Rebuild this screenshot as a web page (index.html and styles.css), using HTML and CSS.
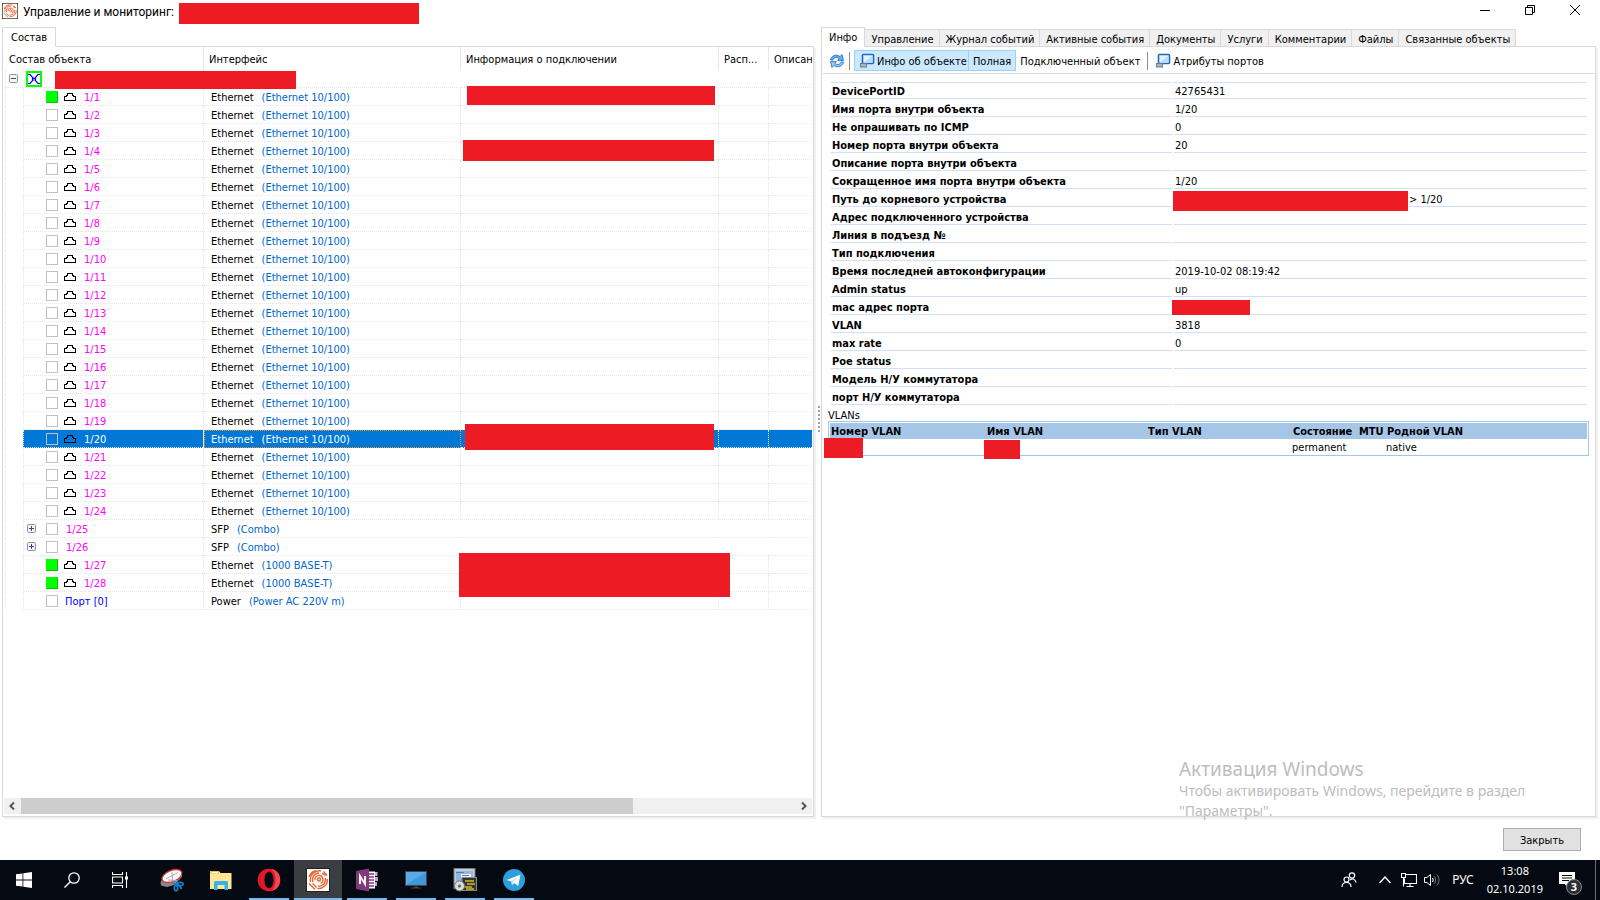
FILE: index.html
```html
<!DOCTYPE html>
<html lang="ru">
<head>
<meta charset="utf-8">
<title>Управление и мониторинг</title>
<link rel="stylesheet" href="styles.css">
</head>
<body>
<svg class="sprites" aria-hidden="true">
  <symbol id="i-port" viewBox="0 0 12 8"><path d="M.5 7.500V3.500H2.500V2.500H3.500V.5H8.500V2.500H9.500V3.500H11.500V7.500Z" fill="none" stroke="#000" shape-rendering="crispEdges"/></symbol>
  <symbol id="i-plus" viewBox="0 0 9 9"><rect x=".5" y=".5" width="8" height="8" rx="1" fill="#f4f4f4" stroke="#919191"/><path d="M2 4.500H7M4.500 2V7" stroke="#2b4a9b"/></symbol>
  <symbol id="i-minus" viewBox="0 0 9 9"><rect x=".5" y=".5" width="8" height="8" rx="1" fill="#f4f4f4" stroke="#919191"/><path d="M2 4.500H7" stroke="#2b4a9b"/></symbol>
  <symbol id="i-switch" viewBox="0 0 16 16"><rect x="1" y="1" width="14" height="14" fill="#fff" stroke="#0f0" stroke-width="2"/><path d="M2 3.500H4L12 12.500H14M2 12.500H4L12 3.500H14M6.500 6.500V9.500M9.500 6.500V9.500" fill="none" stroke="#00f" stroke-width="1.200"/></symbol>
  <symbol id="i-app" viewBox="0 0 24 24"><rect x=".5" y=".5" width="23" height="23" fill="#fff" stroke="#222"/><g fill="none" stroke="#f0642c" stroke-width="1.400"><circle cx="13" cy="11.500" r="1.500"/><path d="M9 12A4 4 0 1 1 14.500 15.300M7 14A6.500 6.500 0 0 1 13 5M19.300 10A6.500 6.500 0 0 1 12 18M4.500 14A9 9 0 0 1 15 3M21.500 11A9 9 0 0 1 11.500 20.500M3 9A9.500 9.500 0 0 1 10 2.800M3 15.500L9 21.500M6.500 15.500L10.500 19.500M16 5.200L19.500 7.500M17.500 3.500L21 7.500"/></g></symbol>
  <symbol id="i-screen" viewBox="0 0 16 16"><rect x="3.500" y="1.500" width="11" height="9" rx="1" fill="#e2f2ff" stroke="#1b6bc4" stroke-width="1.600"/><path d="M4.500 9.500L13.500 3V9.500Z" fill="#b9defc"/><rect x="1.500" y="10.500" width="6" height="3.500" fill="#aab4bf" stroke="#6f7b88"/></symbol>
</svg>

<header class="titlebar">
  <svg class="s16"><use href="#i-app"/></svg>
  <h1 class="title">Управление и мониторинг:</h1>
  <span class="mask mask-title"></span>
  <div class="win-buttons">
    <button aria-label="Свернуть"><svg class="s12" viewBox="0 0 12 12"><path d="M1 6.500H11" stroke="#000"/></svg></button>
    <button aria-label="Восстановить"><svg class="s12" viewBox="0 0 12 12"><path d="M1.500 3.500H8.500V10.500H1.500ZM3.500 3.500V1.500H10.500V8.500H8.500" fill="none" stroke="#000"/></svg></button>
    <button aria-label="Закрыть окно"><svg class="s12" viewBox="0 0 12 12"><path d="M1 1L11 11M11 1L1 11" stroke="#000"/></svg></button>
  </div>
</header>

<main class="workspace">
  <section class="pane">
    <nav class="tabs"><button class="tab active first">Состав</button></nav>
    <div class="panel">
      <div class="tree-wrap">
        <table class="tree">
          <colgroup><col class="c-name"><col class="c-if"><col class="c-conn"><col class="c-loc"><col></colgroup>
          <thead><tr><th>Состав объекта</th><th>Интерфейс</th><th>Информация о подключении</th><th>Расп...</th><th>Описан</th></tr></thead>
          <tbody id="ports"></tbody>
        </table>
      </div>
      <div class="scrollbar">
        <button aria-label="Влево"><svg viewBox="0 0 8 8"><path d="M6 .5L2.500 4L6 7.500" fill="none" stroke="#555" stroke-width="2"/></svg></button>
        <div class="track"><div class="thumb"></div></div>
        <button aria-label="Вправо"><svg viewBox="0 0 8 8"><path d="M2 .5L5.500 4L2 7.500" fill="none" stroke="#555" stroke-width="2"/></svg></button>
      </div>
    </div>
  </section>

  <div class="splitter"><i></i><i></i><i></i><i></i><i></i><i></i><i></i></div>

  <section class="pane">
    <nav class="tabs">
      <button class="tab active">Инфо</button><button class="tab">Управление</button><button class="tab">Журнал событий</button><button class="tab">Активные события</button><button class="tab">Документы</button><button class="tab">Услуги</button><button class="tab">Комментарии</button><button class="tab">Файлы</button><button class="tab">Связанные объекты</button>
    </nav>
    <div class="panel">
      <div class="toolbar">
        <button class="tool refresh" aria-label="Обновить"><svg class="s16" viewBox="0 0 16 16"><path d="M1.500 7C2 3 7 .5 11 3.500L13 1.500L14.500 7.500H8.500L10 5.500C7.500 3.500 4.500 4.500 4 7Z" fill="#62aef0" stroke="#1d6fc0" stroke-width=".8"/><path d="M14.500 9C14 13 9 15.500 5 12.500L3 14.500L1.500 8.500H7.500L6 10.500C8.500 12.500 11.500 11.500 12 9Z" fill="#8cc8f8" stroke="#1d6fc0" stroke-width=".8"/></svg></button>
        <span class="sep"></span>
        <button class="tool on wide"><svg class="s16"><use href="#i-screen"/></svg><span>Инфо об объекте</span></button>
        <button class="tool on"><span>Полная</span></button>
        <button class="tool linked"><span>Подключенный объект</span></button>
        <span class="sep"></span>
        <button class="tool"><svg class="s16"><use href="#i-screen"/></svg><span>Атрибуты портов</span></button>
      </div>
      <div class="info">
        <table class="props"><colgroup><col class="p-name"><col></colgroup><tbody id="props"></tbody></table>
        <h2 class="caption">VLANs</h2>
        <table class="vlans">
          <colgroup><col class="v1"><col class="v2"><col class="v3"><col class="v4"><col class="v5"><col></colgroup>
          <thead><tr><th>Номер VLAN</th><th>Имя VLAN</th><th>Тип VLAN</th><th>Состояние</th><th>MTU</th><th>Родной VLAN</th></tr></thead>
          <tbody><tr><td><span class="mask mask-v1"></span></td><td><span class="mask mask-v2"></span></td><td></td><td>permanent</td><td></td><td>native</td></tr></tbody>
        </table>
      </div>
    </div>
    <div class="activation"><p class="act-title">Активация Windows</p><p>Чтобы активировать Windows, перейдите в раздел "Параметры".</p></div>
  </section>
</main>

<footer class="dialog-footer"><button class="close-btn">Закрыть</button></footer>

<div class="taskbar">
  <div class="apps">
    <button class="task system" aria-label="Пуск"><svg class="s16" viewBox="0 0 16 16"><path d="M0 2.300L6.500 1.400V7.600H0ZM7.300 1.300L16 0V7.600H7.300ZM0 8.400H6.500V14.600L0 13.700ZM7.300 8.400H16V16L7.300 14.700Z" fill="#fff"/></svg></button>
    <button class="task system" aria-label="Поиск"><svg class="s16" viewBox="0 0 16 16"><circle cx="10" cy="6" r="5.200" fill="none" stroke="#fff" stroke-width="1.300"/><path d="M6.300 9.700L.5 15.500" stroke="#fff" stroke-width="1.400"/></svg></button>
    <button class="task system" aria-label="Представление задач"><svg class="s16" viewBox="0 0 16 16"><path d="M.5 0V2.500H10.500V0M.5 16V13.500H10.500V16M.5 5H10.500V11H.5ZM14.500 0V16" fill="none" stroke="#fff" stroke-width="1.100"/><path d="M13 4.500H16V7.500H13Z" fill="#fff"/></svg></button>
    <button class="task snip" aria-label="Ножницы"><svg class="s24" viewBox="0 0 24 24"><path d="M.5 14L4 9L22 5V9L14 17L7 19L1 17.500Z" fill="#85898e"/><ellipse cx="12" cy="8" rx="10.500" ry="5.600" transform="rotate(-22 12 8)" fill="#f8f8fa" stroke="#d8323a" stroke-width="1.300"/><path d="M6 11L18 4.500M12 4L13 14M8 12L17 12.500" stroke="#aaa" fill="none"/><g fill="none" stroke="#1680c8" stroke-width="1.700"><ellipse cx="16" cy="20" rx="1.700" ry="2.700"/><ellipse cx="20.500" cy="16" rx="2.700" ry="1.700"/><path d="M12.500 15L19.500 17.500M16 18L17.500 13M19.500 17.500L21.500 21"/></g></svg></button>
    <button class="task" aria-label="Проводник"><svg class="s24" viewBox="0 0 24 24"><path d="M1 3H10L11.500 5H22.500V21H1Z" fill="#ffe596"/><path d="M1 3H10V5.500H1Z" fill="#f3c03a"/><path d="M2.500 4H9V5H2.500Z" fill="#fff"/><path d="M5 22V14.500Q5 13 6.500 13H17.500Q19 13 19 14.500V22H15.500V17H8.500V22Z" fill="#35b2ea"/></svg></button>
    <button class="task open" aria-label="Opera"><svg class="s24" viewBox="0 0 24 24"><path d="M12 .8C5.500 .8 .8 5.500 .8 12S5.500 23.200 12 23.200 23.200 18.500 23.200 12 18.500 .8 12 .8ZM12 3.800C15 3.800 16.500 7.500 16.500 12S15 20.200 12 20.200 7.500 16.500 7.500 12 9 3.800 12 3.800Z" fill="#e3162a" fill-rule="evenodd"/><path d="M14.500 1.100C20 2.200 23.200 6.500 23.200 12S20 21.800 14.500 22.900C20 18 20 6 14.500 1.100Z" fill="#f04a50"/></svg></button>
    <button class="task open current" aria-label="Управление и мониторинг"><svg class="s24"><use href="#i-app"/></svg></button>
    <button class="task open" aria-label="OneNote"><svg class="s24" viewBox="0 0 24 24"><path d="M13 3.500H20V20.500H13Z" fill="#fff"/><path d="M14 6H19M14 9H19M14 12H19M14 15H19M14 18H19" stroke="#80397b" stroke-width="1.400"/><path d="M20 4H22.500V8H20ZM20 9H23V13H20ZM20 14H22V18H20Z" fill="#c9a5c7"/><path d="M1 3L14 .5V23.500L1 21Z" fill="#80397b"/><path d="M5 16V8L10 16V8" fill="none" stroke="#fff" stroke-width="1.900"/></svg></button>
    <button class="task open" aria-label="Компьютер"><svg class="s24" viewBox="0 0 24 24"><rect x="1.500" y="3.500" width="21" height="14" fill="#3f97de" stroke="#444"/><path d="M2 4H22L2 17Z" fill="#58aaea"/><path d="M10 18.500H14V19.500H17V20.500H7V19.500H10Z" fill="#444"/></svg></button>
    <button class="task open" aria-label="Установщик"><svg class="s24" viewBox="0 0 24 24"><rect x="1" y=".5" width="21" height="20" fill="#c9ccd0" stroke="#77797c"/><path d="M3 3H20V14H3Z" fill="#8fb6e6"/><path d="M8 6H18V10H8Z" fill="#eef3f9"/><path d="M3 4.500H11M9 7.500H16" stroke="#4c7dbb"/><rect x="9" y="9.500" width="14.500" height="13" fill="#333" stroke="#888"/><path d="M12 13H21M14 16H22M12 19H19M13 21H21" stroke="#d4b928" stroke-width="1.300"/><circle cx="6.500" cy="18" r="5" fill="#d8dadc" stroke="#77797c"/><circle cx="6.500" cy="18" r="1.600" fill="#666"/></svg></button>
    <button class="task open" aria-label="Telegram"><svg class="s24" viewBox="0 0 24 24"><circle cx="12" cy="12" r="11" fill="#2ca0dc"/><path d="M4.500 12L18.500 6.500L16.200 18L12 15L10 17.300L9.300 13.500Z" fill="#fff"/><path d="M9.300 13.500L16 8.500L10.500 14.500L10 17.300Z" fill="#b8d5e6"/></svg></button>
  </div>
  <div class="tray">
    <button aria-label="Люди"><svg class="s16" viewBox="0 0 16 16"><g fill="none" stroke="#fff" stroke-width="1.200"><circle cx="5.500" cy="7.500" r="2.500"/><path d="M1 15C1 12 3 10.500 5.500 10.500S10 12 10 15"/><circle cx="11" cy="3.500" r="2.700"/><path d="M9 8C11.500 6 14.500 7 15 10.500"/></g></svg></button>
    <button class="chev" aria-label="Скрытые значки"><svg class="s12" viewBox="0 0 12 12"><path d="M.5 9L6 3L11.500 9" fill="none" stroke="#fff" stroke-width="1.400"/></svg></button>
    <button aria-label="Сеть"><svg class="s16" viewBox="0 0 16 16"><path d="M5 2.500H15.500V11.500H3.500V6.500M9 11.500V14.500M5.500 14.500H12.500M.5 1.500H4.500V5.500H.5ZM2.500 5.500V14.500" fill="none" stroke="#fff" stroke-width="1.100"/></svg></button>
    <button aria-label="Громкость"><svg class="s16" viewBox="0 0 16 16"><path d="M.5 5.500H3L6.500 2.500V13.500L3 10.500H.5Z" fill="none" stroke="#fff"/><path d="M8.500 6Q10 8 8.500 10" fill="none" stroke="#fff"/><path d="M10.500 4.500Q13 8 10.500 11.500M13 2.500Q17 8 13 13.500" fill="none" stroke="#777"/></svg></button>
    <button class="lang">РУС</button>
    <button class="clock"><time>13:08</time><time>02.10.2019</time></button>
    <button class="notify" aria-label="Уведомления"><svg class="s16" viewBox="0 0 16 16"><path d="M0 0H16V12H9V15.500L5.500 12H0Z" fill="#fff"/><path d="M3 3.500H13M3 6H13M3 8.500H10" stroke="#05090f"/></svg><span class="badge">3</span></button>
    <span class="desktop-edge"></span>
  </div>
</div>
<script src="app.js"></script>
</body>
</html>
```

FILE: styles.css
```css
* { box-sizing: border-box; }
body {
  margin: 0;
  height: 100vh;
  display: flex;
  flex-direction: column;
  overflow: hidden;
  background: #fff;
  color: #000;
  font: 11px/14px "DejaVu Sans Condensed", "DejaVu Sans", sans-serif;
}
button {
  font: inherit;
  color: inherit;
  background: none;
  border: 0;
  padding: 0;
  margin: 0;
  white-space: nowrap;
}
h1, h2, p { margin: 0; font-size: inherit; font-weight: inherit; }
svg { display: block; flex: none; }
table { border-collapse: separate; border-spacing: 0; table-layout: fixed; width: 100%; }
th, td { padding: 0; text-align: left; white-space: nowrap; }
.sprites { position: absolute; width: 0; height: 0; }
.s9 { width: 9px; height: 9px; }
.s12 { width: 12px; height: 12px; }
.s16 { width: 16px; height: 16px; }
.s24 { width: 24px; height: 24px; }
.mask { background: #ed1c24; }

/* Title bar */
.titlebar { display: flex; align-items: flex-start; height: 27px; padding: 3px 19px 0 2px; }
.title { margin: 0 0 0 5px; width: 156px; font: 12px/18px Roboto, sans-serif; white-space: nowrap; }
.mask-title { width: 240px; height: 21px; }
.win-buttons { display: flex; gap: 33px; margin-left: auto; padding-top: 1px; }

/* Panes */
.workspace {
  flex: 1;
  min-height: 0;
  display: grid;
  grid-template-columns: minmax(0, 814fr) 5px minmax(0, 777fr);
  padding: 0 2px;
}
.pane { position: relative; display: flex; flex-direction: column; min-height: 0; }
.tabs { display: flex; align-items: flex-end; height: 20px; margin-bottom: -1px; z-index: 1; }
.tab {
  height: 18px;
  padding: 3px 5px 0 6px;
  background: #f0f0f0;
  border: 1px solid #d9d9d9;
  border-left-width: 0;
}
.tab.active { height: 20px; padding: 2px 7px 0; background: #fff; border-left-width: 1px; border-bottom-color: #fff; }
.tab.first { padding: 2px 8px 0; }
.panel {
  flex: 1;
  min-height: 0;
  display: flex;
  flex-direction: column;
  margin-right: 2px;
  border: 1px solid #d9d9d9;
  box-shadow: 2px 2px 0 #f0f0f0;
}
.splitter { display: flex; flex-direction: column; gap: 2px; align-self: center; align-items: center; margin-top: -6px; }
.splitter i { width: 2px; height: 2px; background: #a0a0a0; }

/* Port tree */
.tree-wrap { flex: 1; overflow: hidden; padding: 0 1px; }
.c-name { width: 200px; }
.c-if { width: 257px; }
.c-conn { width: 258px; }
.c-loc { width: 50px; }
.tree th { height: 23px; padding: 3px 5px 0; font-weight: normal; border-right: 1px solid #e5e5e5; overflow: hidden; }
.tree th:last-child { border-right: 0; }
.tree td { position: relative; height: 18px; border-right: 1px dotted #e6e6e6; border-bottom: 1px dotted #e6e6e6; }
.tree td:first-child { border-bottom: 0; padding-left: 1px; }
.tree td:last-child { border-right: 0; }
.tree .wide td:nth-child(n+2) { border-right-color: transparent; }
.root, .node { display: flex; align-items: center; height: 18px; }
.root { gap: 8px; padding-left: 3px; border-left: 1px dotted #e6e6e6; border-bottom: 1px dotted #e6e6e6; }
.guide { width: 18px; height: 18px; border-left: 1px dotted #e6e6e6; }
.leaf { flex: 1; display: flex; align-items: center; height: 18px; border-left: 1px dotted #e6e6e6; border-bottom: 1px dotted #e6e6e6; }
.expander { width: 22px; padding-left: 3px; }
.state { appearance: none; width: 12px; height: 12px; margin: 0 8px 0 0; border: 1px solid #c0c0c0; background: #fff; }
.state:checked { background: #0f0; border-color: #0f0 #0c0 #0c0 #0f0; }
.port-icon { width: 12px; height: 8px; margin: 0 8px 0 -2px; }
.port-name { padding-top: 2px; color: #f0f; }
.port-name.plain { margin-left: -1px; color: #00f; }
.iface { display: flex; gap: 8px; padding: 2px 0 0 7px; }
.iface span { color: #0066cc; }
.selected .leaf, .selected td:nth-child(n+2) { background: #0078d7; color: #fff; }
.selected .port-name, .selected .iface span { color: #fff; }
.selected .state { background: #0078d7; }
.selected td:nth-child(2) { outline: 1px dotted #ff8c28; outline-offset: -1px; }
.tree .mask { position: absolute; z-index: 1; }
.mask-root { left: 51px; top: 1px; width: 241px; height: 18px; }
.mask-p1 { left: 6px; top: -2px; width: 248px; height: 19px; }
.mask-p4 { left: 2px; top: -2px; width: 251px; height: 21px; }
.mask-p20 { left: 4px; top: -6px; width: 249px; height: 26px; }
.mask-p27 { left: -2px; top: -3px; width: 271px; height: 44px; }

.scrollbar { display: flex; height: 16px; margin: 0 1px 2px; background: #f0f0f0; }
.scrollbar button { width: 16px; display: grid; place-items: center; }
.scrollbar svg { width: 8px; height: 8px; }
.track { flex: 1; padding-left: 1px; }
.thumb { width: 79%; height: 100%; background: #cdcdcd; }

/* Info pane */
.toolbar { display: flex; align-items: center; height: 27px; margin: 0 1px; padding: 1px 0 0 5px; border-bottom: 1px solid #d9d9d9; }
.tool { display: flex; align-items: center; gap: 2px; height: 21px; padding: 0 4px; border: 1px solid transparent; }
.tool span { padding-top: 2px; }
.tool.on { background: #cce8ff; border-color: #99d1ff; }
.tool.on + .on { border-left: 0; }
.tool.wide { margin-left: 1px; padding: 0 1px 0 4px; }
.tool.linked { padding: 0 4px 0 3px; }
.tool.refresh { padding: 0; }
.sep { width: 1px; height: 18px; margin: 0 3px; background: #8c8c8c; }
.sep:nth-of-type(2) { margin: 0 2px; }
.info { padding: 8px 6px 0; }
.props { width: calc(100% - 5px); margin: 0 2px 0 3px; }
.p-name { width: 343px; }
.props th, .props td { vertical-align: bottom; }
.props td { position: relative; height: 18px; padding: 0 1px; border-bottom: 1px solid #cfdffc; }
.props tr:first-child td { height: 17px; border-top: 1px solid #cfdffc; }
.props th { height: 18px; padding: 0 0 1px 1px; font-weight: bold; background: linear-gradient(#cfdffc, #cfdffc) 0 100% / calc(100% - 2px) 1px no-repeat; }
.props tr:first-child th { height: 17px; background: linear-gradient(#cfdffc, #cfdffc) 0 100% / calc(100% - 2px) 1px no-repeat, linear-gradient(#cfdffc, #cfdffc) 0 0 / calc(100% - 2px) 1px no-repeat; }
.props th, .props td { line-height: 13px; }
.path { padding-left: 234px; }
.props .mask { position: absolute; }
.mask-path { left: -1px; top: 2px; width: 235px; height: 20px; }
.mask-mac { left: -2px; top: 3px; width: 78px; height: 15px; }
.caption { height: 16px; padding-top: 4px; }
.vlans { border: 1px solid #a5c6e6; padding: 1px; }
.vlans th, .vlans td { vertical-align: bottom; }
.v1 { width: 156px; }
.v2 { width: 161px; }
.v3 { width: 145px; }
.v4 { width: 66px; }
.v5 { width: 28px; }
.vlans th { height: 16px; padding-left: 1px; background: #a5c6e6; font-weight: bold; }
.vlans td { position: relative; height: 15px; line-height: 13px; }
.vlans .mask { position: absolute; }
.mask-v1 { left: -6px; top: -1px; width: 39px; height: 20px; }
.mask-v2 { left: -2px; top: 1px; width: 36px; height: 19px; }

.activation {
  position: absolute;
  left: 358px;
  bottom: -4px;
  width: 390px;
  color: #bdbdbd;
  font: 14px/20px "Noto Sans", "Open Sans", sans-serif;
  pointer-events: none;
}
.act-title { font-size: 19px; line-height: 24px; }

.dialog-footer { height: 43px; display: flex; justify-content: flex-end; align-items: flex-start; padding: 11px 19px 0; }
.close-btn { width: 78px; height: 23px; padding-top: 2px; background: #e1e1e1; border: 1px solid #adadad; }

/* Taskbar */
.taskbar { display: flex; justify-content: space-between; height: 40px; background: #050a12; color: #fff; }
.apps { display: flex; }
.task { width: 49px; height: 40px; display: grid; place-items: center; border-bottom: 2px solid transparent; border-top: 2px solid transparent; }
.task.system { width: 48px; }
.task.snip { margin-left: 3px; }
.task.open { width: 40px; margin: 0 5px 0 4px; border-bottom-color: #76b9ed; }
.task.current { width: 48px; margin: 0 1px 0 0; background: #3a3e43; border-top-color: #3a3e43; }
.tray { display: flex; align-items: center; font: 12px/18px "Noto Sans", sans-serif; }
.tray button { margin-right: 7px; }
.tray button:first-child { margin-right: 22px; }
.tray .chev { margin-right: 10px; }
.tray .lang { margin: 0 13px 0 5px; }
.tray .clock { display: flex; flex-direction: column; align-items: center; margin-right: 16px; font-size: 11px; }
.tray .notify { position: relative; margin-right: 20px; }
.badge {
  position: absolute;
  left: 7px;
  top: 7px;
  width: 16px;
  height: 16px;
  border: 1px solid #8a8a8a;
  border-radius: 50%;
  background: #2b2e33;
  font: bold 11px/14px "Noto Sans", sans-serif;
}
.desktop-edge { width: 1px; height: 40px; margin-right: 4px; background: #6b6e73; }
```

FILE: app.js
```js
const ports = [];
for (let n = 1; n <= 28; n++) {
  const combo = n === 25 || n === 26;
  ports.push({
    name: "1/" + n,
    up: n === 1 || n > 26,
    combo,
    type: combo ? "SFP" : "Ethernet",
    media: combo ? "(Combo)" : n > 26 ? "(1000 BASE-T)" : "(Ethernet 10/100)",
    mask: { 1: "mask-p1", 4: "mask-p4", 20: "mask-p20", 27: "mask-p27" }[n],
    selected: n === 20
  });
}
ports.push({ name: "Порт [0]", plain: true, type: "Power", media: "(Power AC 220V m)" });

const rootRow = `<tr class="wide"><td><div class="root"><svg class="s9"><use href="#i-minus"/></svg>
  <svg class="s16"><use href="#i-switch"/></svg></div><span class="mask mask-root"></span></td>
  <td></td><td></td><td></td><td></td></tr>`;

const portRow = p => `<tr class="${p.selected ? "selected" : p.combo ? "wide" : ""}">
  <td><div class="node"><span class="guide"></span><div class="leaf">
    <span class="expander">${p.combo ? '<svg class="s9"><use href="#i-plus"/></svg>' : ""}</span>
    <input type="checkbox" class="state" aria-label="${p.name}" ${p.up ? "checked" : ""}>
    ${p.combo || p.plain ? "" : '<svg class="port-icon"><use href="#i-port"/></svg>'}
    <span class="port-name ${p.plain ? "plain" : ""}">${p.name}</span></div></div></td>
  <td><div class="iface">${p.type}<span>${p.media}</span></div></td>
  <td>${p.mask ? `<span class="mask ${p.mask}"></span>` : ""}</td><td></td><td></td></tr>`;

document.getElementById("ports").innerHTML = rootRow + ports.map(portRow).join("");

const props = [
  ["DevicePortID", "42765431"],
  ["Имя порта внутри объекта", "1/20"],
  ["Не опрашивать по ICMP", "0"],
  ["Номер порта внутри объекта", "20"],
  ["Описание порта внутри объекта", ""],
  ["Сокращенное имя порта внутри объекта", "1/20"],
  ["Путь до корневого устройства", '<span class="mask mask-path"></span><span class="path">&gt; 1/20</span>'],
  ["Адрес подключенного устройства", ""],
  ["Линия в подъезд №", ""],
  ["Тип подключения", ""],
  ["Время последней автоконфигурации", "2019-10-02 08:19:42"],
  ["Admin status", "up"],
  ["mac адрес порта", '<span class="mask mask-mac"></span>'],
  ["VLAN", "3818"],
  ["max rate", "0"],
  ["Poe status", ""],
  ["Модель Н/У коммутатора", ""],
  ["порт Н/У коммутатора", ""]
];
document.getElementById("props").innerHTML =
  props.map(([k, v]) => `<tr><th scope="row">${k}</th><td>${v}</td></tr>`).join("");
```
